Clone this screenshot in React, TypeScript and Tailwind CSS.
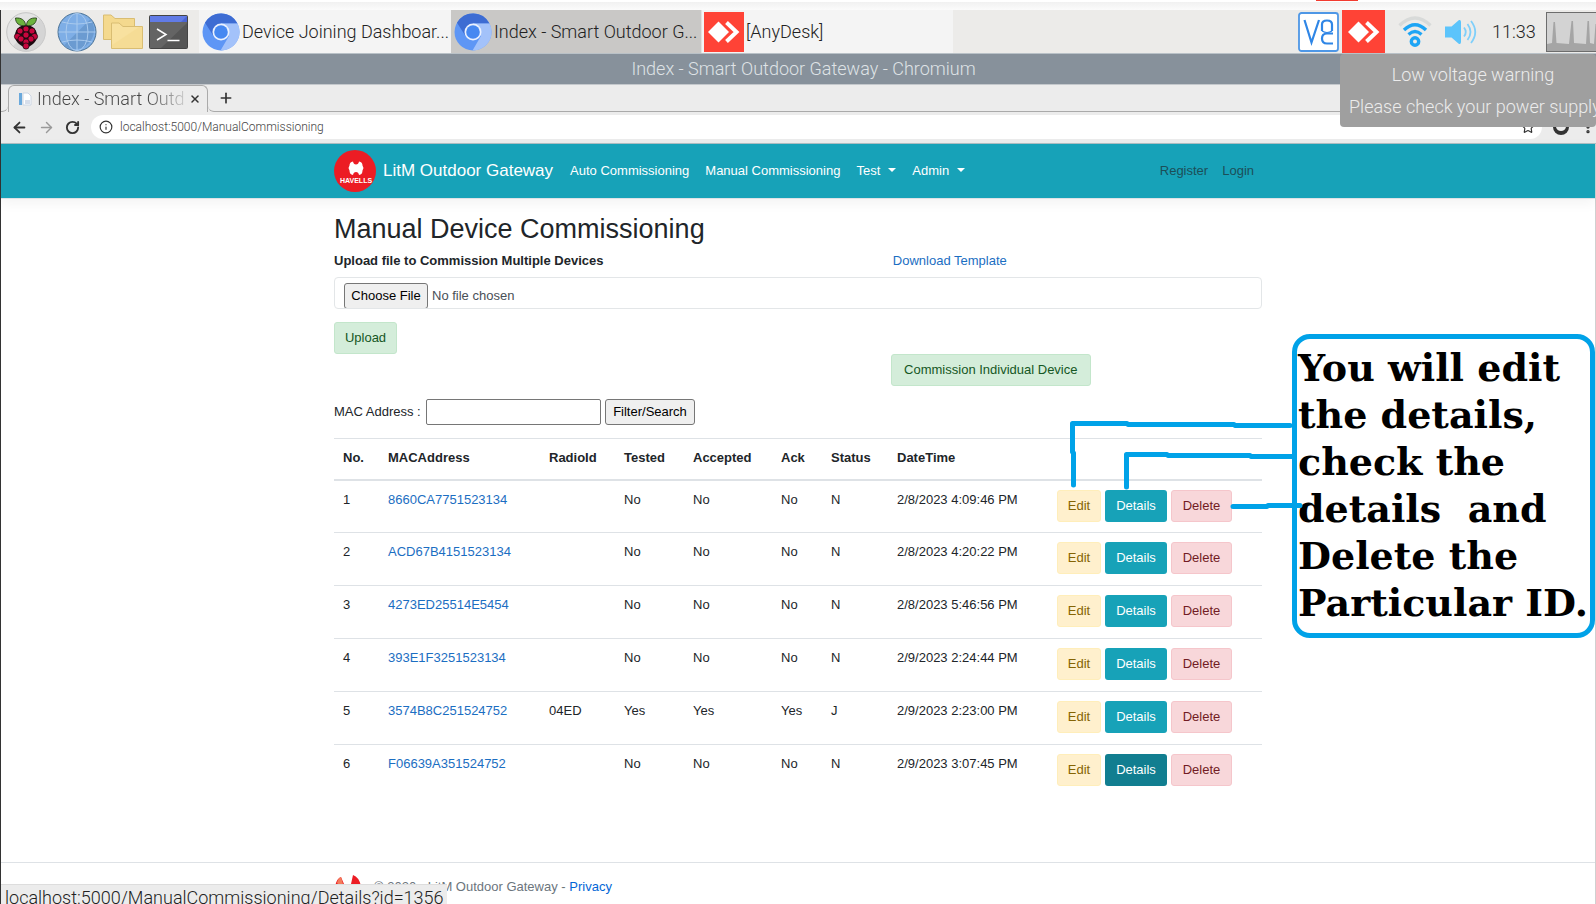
import React from "react";
import { ArrowLeft, ArrowRight, RotateCw, Info, Star, X, Plus, MoreVertical } from "lucide-react";

type Device = {
  no: number;
  mac: string;
  radio: string;
  tested: string;
  accepted: string;
  ack: string;
  status: string;
  date: string;
};

const devices: Device[] = [
  { no: 1, mac: "8660CA7751523134", radio: "", tested: "No", accepted: "No", ack: "No", status: "N", date: "2/8/2023 4:09:46 PM" },
  { no: 2, mac: "ACD67B4151523134", radio: "", tested: "No", accepted: "No", ack: "No", status: "N", date: "2/8/2023 4:20:22 PM" },
  { no: 3, mac: "4273ED25514E5454", radio: "", tested: "No", accepted: "No", ack: "No", status: "N", date: "2/8/2023 5:46:56 PM" },
  { no: 4, mac: "393E1F3251523134", radio: "", tested: "No", accepted: "No", ack: "No", status: "N", date: "2/9/2023 2:24:44 PM" },
  { no: 5, mac: "3574B8C251524752", radio: "04ED", tested: "Yes", accepted: "Yes", ack: "Yes", status: "J", date: "2/9/2023 2:23:00 PM" },
  { no: 6, mac: "F06639A351524752", radio: "", tested: "No", accepted: "No", ack: "No", status: "N", date: "2/9/2023 3:07:45 PM" },
];

function Raspberry() {
  const drupes = [
    [20, 17], [14, 19], [26, 19], [20, 23], [11.5, 24.5], [28.5, 24.5], [15, 27], [25, 27], [20, 30], [20, 34],
  ];
  return (
    <svg viewBox="0 0 40 40" className="h-10 w-10" aria-hidden="true">
      <circle cx="20" cy="20" r="19.3" fill="#e4e4e4" stroke="#c4c4c4" />
      <path d="M34 7A19 19 0 0 1 7 34Z" fill="#cfcfcf" opacity=".7" />
      <path d="M20 13C13 13 8.500 18 9 25C9.500 30 14 33.500 20 36C26 33.500 30.500 30 31 25C31.500 18 27 13 20 13Z" fill="#1d0a10" />
      {drupes.map(([x, y]) => (
        <circle key={`${x}-${y}`} cx={x} cy={y} r="3.100" fill="#c7053d" stroke="#1d0a10" strokeWidth=".8" />
      ))}
      <path d="M19.500 13.500C13 14.500 9.500 11 9.500 6C15 5.500 19.500 8 19.500 13.500Z" fill="#6cb33e" stroke="#1e3312" strokeWidth=".8" />
      <path d="M20.500 13.500C27 14.500 30.500 11 30.500 6C25 5.500 20.500 8 20.500 13.500Z" fill="#6cb33e" stroke="#1e3312" strokeWidth=".8" />
    </svg>
  );
}

function Globe() {
  return (
    <svg viewBox="0 0 40 40" className="h-10 w-10" aria-hidden="true">
      <circle cx="20" cy="20" r="19" fill="#7eaee6" stroke="#4a7296" />
      <path d="M33.500 7A19 19 0 0 1 7 33.500Z" fill="#6b9bd1" />
      <g fill="none" stroke="#a9caee" strokeWidth="1">
        <path d="M20 1V39M1.500 20H38.500M5 10Q20 14 35 10M5 30Q20 26 35 30" />
        <ellipse cx="20" cy="20" rx="11" ry="18.800" />
      </g>
    </svg>
  );
}

function Folders() {
  return (
    <svg viewBox="0 0 40 36" className="h-9 w-10" aria-hidden="true">
      <g stroke="#d9bd72" strokeWidth="1">
        <path d="M.5 1H8L12 4.500H31.500V25.500H.5Z" fill="#f4d98e" />
        <path d="M8.500 9H16L20 12.500H39.500V34.500H8.500Z" fill="#f8e19f" />
      </g>
      <path d="M9 31L36 13H39V34H9Z" fill="#f3d98f" opacity=".6" />
    </svg>
  );
}

function Terminal() {
  return (
    <svg viewBox="0 0 39 34" className="h-[34px] w-[39px]" aria-hidden="true">
      <rect x=".5" y=".5" width="38" height="33" rx="1" fill="#555" stroke="#444" />
      <path d="M1 7H38V8L12 33H1Z" fill="#646464" />
      <path d="M1 1H38V7H1Z" fill="#4a64d4" />
      <path d="M1 1H38L32 7H1Z" fill="#617be6" />
      <path d="M8 14L17 19.500L8 25M18.500 25.500H30.500" fill="none" stroke="#fff" strokeWidth="1.500" />
    </svg>
  );
}

function Chromium() {
  return (
    <svg viewBox="0 0 38 38" className="h-[38px] w-[38px] shrink-0" aria-hidden="true">
      <circle cx="19" cy="19" r="18.500" fill="#5e96f5" />
      <path d="M3 9.800A18.500 18.500 0 0 1 35.500 10.500H19L11.500 23Z" fill="#3d6cd3" />
      <path d="M19 10.500H35.500A18.500 18.500 0 0 1 18.500 37.500L27 23Z" fill="#a3c2fa" />
      <circle cx="19" cy="19" r="8.500" fill="#eaf1fe" />
      <circle cx="19" cy="19" r="6.800" fill="#4688f1" />
    </svg>
  );
}

function AnyDesk() {
  return (
    <svg viewBox="0 0 36 24" className="h-6 w-9" aria-hidden="true">
      <path d="M12.500 1.500L23 12L12.500 22.500L2 12Z" fill="#fff" />
      <path d="M20.500 2.500L30.500 12L20.500 21.500" fill="none" stroke="#fff" strokeWidth="4" />
    </svg>
  );
}

function Vnc() {
  return (
    <svg viewBox="0 0 41 40" className="h-10 w-[41px]" aria-hidden="true">
      <rect x="1" y="1" width="39" height="38" rx="2.500" fill="#fff" stroke="#4e97e6" strokeWidth="1.800" />
      <g fill="none" stroke="#2f86e6" strokeWidth="2.200">
        <path d="M6.500 8L13.500 30.500L21 8" />
        <path d="M24 19V12.500Q24 8.500 29 8.500Q34 8.500 34 12.500V19" />
        <path d="M35 21.500H29Q24 21.500 24 26.500Q24 31.500 29 31.500H35" />
        <path d="M24 19Q29 22 34 19" strokeWidth="1.200" />
      </g>
    </svg>
  );
}

function Wifi() {
  return (
    <svg viewBox="0 0 34 32" className="h-8 w-[34px]" aria-hidden="true">
      <g fill="none" strokeLinecap="butt">
        <path d="M1.500 9.500Q17-5.500 32.500 9.500" stroke="#d8dad9" strokeWidth="3.200" />
        <path d="M6 14Q17 3.500 28 14" stroke="#1ea5f5" strokeWidth="3.400" />
        <path d="M10.500 18.500Q17 12.500 23.500 18.500" stroke="#1ea5f5" strokeWidth="3.200" />
        <circle cx="17" cy="25.500" r="3.700" stroke="#1ea5f5" strokeWidth="3.400" />
      </g>
    </svg>
  );
}

function Speaker() {
  return (
    <svg viewBox="0 0 34 26" className="h-[26px] w-[34px]" aria-hidden="true">
      <path d="M1 7.500H7.500L15 1Q17 .5 17 3V23Q17 25.500 15 25L7.500 18.500H1Z" fill="#5cc4fb" />
      <g fill="none" stroke="#7fcffa" strokeWidth="1.800">
        <path d="M20 8.500Q23.500 13 20 17.500" />
        <path d="M23.500 5Q29.500 13 23.500 21" />
        <path d="M27 2Q35.500 13 27 24" />
      </g>
    </svg>
  );
}

function CpuGraph() {
  return (
    <svg viewBox="0 0 50 40" className="h-10 w-[50px]" aria-hidden="true">
      <rect x=".5" y=".5" width="54" height="39" fill="#d3d3d3" stroke="#6d6d6d" />
      <path d="M1 32L6 31L7.500 10H9L10.500 31L23 32L25.500 9H27L28 31L40 32L41.500 9H43L44 31L48 32L49.500 12H50V39H1Z" fill="#a5a5a5" />
    </svg>
  );
}

function HavellsLogo() {
  return (
    <svg viewBox="0 0 42 42" className="h-[42px] w-[42px] shrink-0" role="img" aria-label="Havells">
      <circle cx="21" cy="21" r="21" fill="#ec1c24" />
      <path d="M19 11.500Q15.500 12 15.500 15.500L14.500 18L15.500 20.500Q15.500 24.500 19 25Q19.500 22 22 22Q24.500 22 25 25Q28.500 24.500 28.500 20.500L29.500 18L28.500 15.500Q28.500 12 25 11.500Q24.500 14.500 22 14.500Q19.500 14.500 19 11.500Z" fill="#fff" />
      <text x="22" y="33" textAnchor="middle" fill="#fff" className="font-['Liberation_Sans'] text-[7px] font-bold">
        HAVELLS
      </text>
    </svg>
  );
}

function Caret() {
  return <span className="mt-[-3px] h-0 w-0 border-x-4 border-t-4 border-x-transparent border-t-white" />;
}

function Taskbar() {
  return (
    <header className="flex h-11 items-stretch border-b border-[#b9c1c7] bg-[#ecebe9] text-[18px] font-light text-[#222]">
      <div className="flex flex-1 items-center pl-[5px]">
        <button type="button" aria-label="Menu"><Raspberry /></button>
        <button type="button" aria-label="Web browser" className="ml-[11px]"><Globe /></button>
        <button type="button" aria-label="File manager" className="ml-[6px]"><Folders /></button>
        <button type="button" aria-label="Terminal" className="ml-[6px]"><Terminal /></button>
        <button type="button" className="ml-[11px] flex h-full w-[252px] items-center gap-[2px] bg-[#f4f4f4] pl-[3px] whitespace-nowrap">
          <Chromium />Device Joining Dashboar...
        </button>
        <button type="button" className="flex h-full w-[251px] items-center gap-[2px] border-r border-[#e2e2e0] bg-[#c9c8c6] pl-[3px] whitespace-nowrap">
          <Chromium />Index - Smart Outdoor G...
        </button>
        <button type="button" className="flex h-full w-[251px] items-center gap-[2px] bg-[#f4f4f4] pl-[2px] whitespace-nowrap">
          <span className="flex h-10 w-10 items-center justify-center bg-[#ff4336]"><AnyDesk /></span>[AnyDesk]
        </button>
      </div>
      <div className="flex items-center">
        <button type="button" aria-label="VNC server"><Vnc /></button>
        <button type="button" aria-label="AnyDesk" className="ml-[3px] flex h-full w-[43px] items-center justify-center bg-[#ff4336]"><AnyDesk /></button>
        <button type="button" aria-label="Network" className="ml-[13px]"><Wifi /></button>
        <button type="button" aria-label="Volume" className="ml-[12px]"><Speaker /></button>
        <time className="ml-[14px] w-11">11:33</time>
        <div className="ml-[10px]"><CpuGraph /></div>
      </div>
    </header>
  );
}

function BrowserChrome() {
  return (
    <div className="bg-[#ececec]">
      <div className="h-[30px] bg-[#87919b] pl-[10px] text-center text-[18px] leading-[30px] font-light text-[#dfe3e6]">
        Index - Smart Outdoor Gateway - Chromium
      </div>
      <div className="flex h-[28px] border-t border-[#c4c8cc] text-[#333]">
        <div className="w-[7px] rounded-br-md border-b border-[#aaa]" />
        <div className="flex w-[200px] items-center rounded-t-md border-x border-t border-[#aaa] pr-[6px] pl-[9px]">
          <svg viewBox="0 0 14 14" className="h-[14px] w-[14px] shrink-0" aria-hidden="true">
            <path d="M1 1H4V13H1Z" fill="#6aa9dc" />
            <path d="M5 1H10L13 4V13H5Z" fill="#fff" stroke="#ccd6e4" />
            <path d="M7 8H12V12H7Z" fill="#d7deea" />
          </svg>
          <span className="ml-[5px] flex-1 bg-linear-to-r from-[#444] from-75% to-[#44444430] bg-clip-text text-[18px] leading-6 font-light whitespace-nowrap text-transparent">
            Index - Smart Outd
          </span>
          <button type="button" aria-label="Close tab" className="ml-[4px]"><X size={12} strokeWidth={3} /></button>
        </div>
        <div className="flex flex-1 items-center rounded-bl-md border-b border-[#aaa] pl-[10px]">
          <button type="button" aria-label="New tab"><Plus size={16} strokeWidth={2.5} /></button>
        </div>
      </div>
      <div className="flex h-8 items-center border-b border-[#aebfc4] pb-px pl-[10px] text-[#333]">
        <button type="button" aria-label="Back"><ArrowLeft size={17} strokeWidth={2.5} /></button>
        <button type="button" aria-label="Forward" className="ml-[10px] text-[#999]"><ArrowRight size={17} strokeWidth={2} /></button>
        <button type="button" aria-label="Reload" className="ml-[10px]"><RotateCw size={15} strokeWidth={3} /></button>
        <div className="ml-[11px] flex h-6 flex-1 items-center rounded-full bg-white pr-[7px] pl-[8px]">
          <Info size={14} strokeWidth={2} />
          <input
            aria-label="Address"
            defaultValue="localhost:5000/ManualCommissioning"
            className="ml-[7px] flex-1 bg-transparent text-[12px] leading-6 font-light text-[#444] outline-none"
          />
          <Star size={14} />
        </div>
        <svg viewBox="0 0 18 18" className="ml-[10px] h-[18px] w-[18px]" aria-hidden="true">
          <circle cx="9" cy="9" r="8" fill="#333" />
          <path d="M4 9H14Q13 13 9 13Q5 13 4 9Z" fill="#ececec" />
        </svg>
        <button type="button" aria-label="Browser menu" className="ml-[10px]"><MoreVertical size={16} strokeWidth={3} /></button>
      </div>
    </div>
  );
}

function SiteNav() {
  return (
    <nav className="border-b border-[#dee2e6] bg-[#17a2b8] shadow-[0_4px_12px_rgba(0,0,0,0.05)]">
      <div className="mx-auto flex h-[54px] max-w-[928px] items-center text-[13px] text-white">
        <a href="#home" className="flex items-center gap-[7px] text-[17px]"><HavellsLogo />LitM Outdoor Gateway</a>
        <div className="ml-[17px] flex flex-1 gap-[16px]">
          <a href="#auto">Auto Commissioning</a>
          <a href="#manual">Manual Commissioning</a>
          <button type="button" className="flex items-center gap-[8px]">Test <Caret /></button>
          <button type="button" className="flex items-center gap-[8px]">Admin <Caret /></button>
        </div>
        <div className="flex gap-[14px] pr-[8px] text-[#1c4f58]">
          <a href="#register">Register</a>
          <a href="#login">Login</a>
        </div>
      </div>
    </nav>
  );
}

const cell = "px-[9px] pt-[9px] align-top";

function DeviceTable() {
  return (
    <table className="mt-[13px] w-full table-fixed text-left leading-5">
      <colgroup>
        <col className="w-[45px]" />
        <col className="w-[161px]" />
        <col className="w-[75px]" />
        <col className="w-[69px]" />
        <col className="w-[88px]" />
        <col className="w-[50px]" />
        <col className="w-[66px]" />
        <col className="w-[160px]" />
        <col />
      </colgroup>
      <thead>
        <tr className="h-[41px] border-t border-b-2 border-[#dee2e6]">
          {["No.", "MACAddress", "RadioId", "Tested", "Accepted", "Ack", "Status", "DateTime"].map((h) => (
            <th key={h} scope="col" className={cell}>{h}</th>
          ))}
          <th scope="col" className={cell} aria-label="Actions" />
        </tr>
      </thead>
      <tbody>
        {devices.map((d) => (
          <tr key={d.no} className="h-[53px] border-b border-[#dee2e6] last:border-b-0">
            <td className={cell}>{d.no}</td>
            <td className={cell}><a href="#device" className="text-[#1b6ec2]">{d.mac}</a></td>
            <td className={cell}>{d.radio}</td>
            <td className={cell}>{d.tested}</td>
            <td className={cell}>{d.accepted}</td>
            <td className={cell}>{d.ack}</td>
            <td className={cell}>{d.status}</td>
            <td className={cell}>{d.date}</td>
            <td className={cell}>
              <div className="flex gap-[4px]">
                <a href="#edit" className="flex h-8 w-11 items-center justify-center rounded-[3px] border border-[#ffeeba] bg-[#fff0cd] text-[#856404]">Edit</a>
                <a
                  href="#details"
                  className={`flex h-8 w-[62px] items-center justify-center rounded-[3px] text-white ${d.no === 6 ? "bg-[#117e90]" : "bg-[#17a2b8]"}`}
                >
                  Details
                </a>
                <a href="#delete" className="flex h-8 w-[61px] items-center justify-center rounded-[3px] border border-[#f5c6cb] bg-[#f8d7da] text-[#721c24]">Delete</a>
              </div>
            </td>
          </tr>
        ))}
      </tbody>
    </table>
  );
}

function Callout() {
  return (
    <aside>
      <p className="absolute top-[135px] left-[958px] w-[303px] rounded-[18px] border-[5px] border-[#00a2e8] pt-[5px] pb-[7px] pl-px font-['DejaVu_Serif',serif] text-[38px] leading-[47px] font-bold whitespace-nowrap text-black">
        You will edit<br />the details,<br />check the<br />details&nbsp; and<br />Delete the<br />Particular ID.
      </p>
      <svg viewBox="0 0 260 100" className="pointer-events-none absolute top-[212px] left-[730px] h-[100px] w-[260px]" aria-hidden="true">
        <g fill="none" stroke="#00a2e8" strokeWidth="5" strokeLinecap="round" strokeLinejoin="round">
          <path d="M9.500 74V42L8.500 41V12.500H63L64 13.500H170L171 14.500H226" />
          <path d="M62.500 76V43.500H103L104 44.500H186L187 45.500H230" />
          <path d="M169 95.500H203L204 94.500H236" />
        </g>
      </svg>
    </aside>
  );
}

export default function App() {
  return (
    <div className="relative flex min-h-screen flex-col overflow-hidden bg-white font-['Roboto',sans-serif]">
      <div className="h-[10px] border-t-2 border-white bg-linear-to-b from-[#f1f1f1] to-[#fbfbfb]" />
      <div className="absolute top-0 right-[238px] h-px w-[42px] bg-[#f23b30]" />
      <div className="flex flex-1 flex-col border-l border-[#333]">
        <Taskbar />
        <BrowserChrome />
        <div className="flex flex-1 flex-col border-r border-[#d0d0d0] font-['Liberation_Sans',Arial,sans-serif] text-[13px] text-[#212529]">
          <SiteNav />
          <main className="relative mx-auto w-full max-w-[928px] flex-1 pt-[14px]">
            <h1 className="text-[27px] leading-8">Manual Device Commissioning</h1>
            <div className="mt-[6px] flex leading-5">
              <label htmlFor="upload" className="w-3/5 font-bold">Upload file to Commission Multiple Devices</label>
              <a href="#template" className="ml-[2px] text-[#1b6ec2]">Download Template</a>
            </div>
            <input
              id="upload"
              type="file"
              className="mt-[6px] block h-8 w-full rounded-[4px] border border-[#e3e6e8] px-[9px] pt-[5px] text-[#495057] file:h-[26px] file:w-[84px] file:rounded-[3px] file:border file:border-solid file:border-[#767676] file:bg-[#efefef] file:px-0 file:text-center file:text-black"
            />
            <button type="button" className="mt-[13px] block h-8 w-[63px] rounded-[3px] border border-[#c3e6cb] bg-[#d4edda] text-[#155724]">
              Upload
            </button>
            <div className="flex">
              <div className="w-3/5" />
              <a href="#commission" className="flex h-8 w-[200px] items-center justify-center rounded-[3px] border border-[#c3e6cb] bg-[#d4edda] text-[#155724]">
                Commission Individual Device
              </a>
            </div>
            <form className="mt-[13px] flex items-center" onSubmit={(e) => e.preventDefault()}>
              <label htmlFor="mac" className="w-[92px]">MAC Address :</label>
              <input id="mac" type="text" className="h-[26px] w-[175px] rounded-[2px] border border-[#767676] px-1" />
              <button type="submit" className="ml-[4px] h-[26px] w-[90px] rounded-[3px] border border-[#767676] bg-[#efefef] text-black">
                Filter/Search
              </button>
            </form>
            <DeviceTable />
            <Callout />
          </main>
          <footer className="border-t border-[#dee2e6]">
            <div className="mx-auto flex h-[41px] max-w-[928px] items-start pt-[12px] leading-[24px] text-[#6c757d]">
              <svg viewBox="0 0 30 26" className="h-[26px] w-[30px]" aria-hidden="true">
                <path d="M1 11Q3 3 7 2L10 9Q14 12 17 9L19 0Q25 2 27 11Q27 22 14 25Q2 22 1 11Z" fill="#ec1c24" />
                <path d="M3 8Q4 3 7 2L9 9L6 11Z" fill="#f37b5b" />
              </svg>
              <p className="ml-[10px]">© 2020 - LitM Outdoor Gateway - <a href="#privacy" className="text-[#0366d6]">Privacy</a></p>
            </div>
          </footer>
        </div>
      </div>
      <div role="alert" className="absolute top-[54px] right-0 w-[256px] overflow-hidden rounded-[4px] bg-[#9f9f9f] pt-[5px] pb-[4px] text-center text-[18px] leading-8 font-light whitespace-nowrap text-[#ececec]">
        <p className="pl-[10px]">Low voltage warning</p>
        <p className="pl-[9px]">Please check your power supply</p>
      </div>
      <div className="absolute bottom-0 left-px h-5 w-[446px] overflow-hidden border-t border-[#ddd] bg-[#ececec] pl-[4px] text-[18px] leading-[26px] font-light whitespace-nowrap text-[#222]">
        localhost:5000/ManualCommissioning/Details?id=1356
      </div>
    </div>
  );
}
